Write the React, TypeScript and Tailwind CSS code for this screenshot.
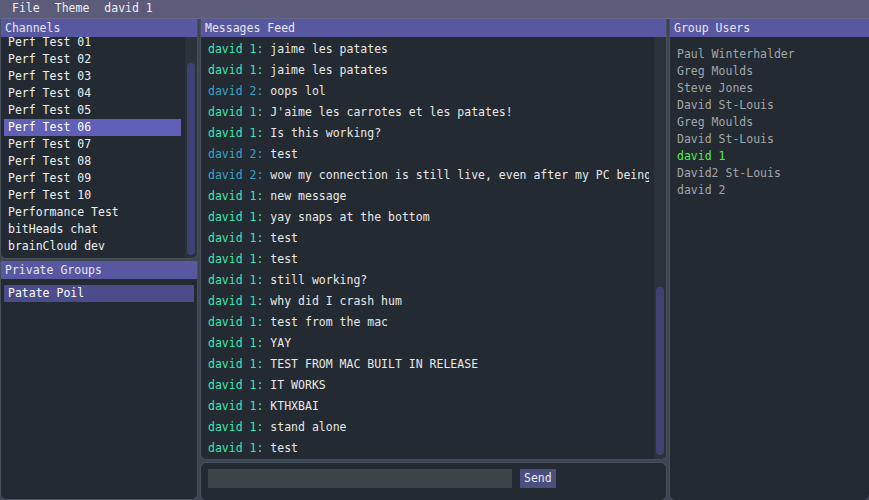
import React from "react"

const channels = [
  "Perf Test 01",
  "Perf Test 02",
  "Perf Test 03",
  "Perf Test 04",
  "Perf Test 05",
  "Perf Test 06",
  "Perf Test 07",
  "Perf Test 08",
  "Perf Test 09",
  "Perf Test 10",
  "Performance Test",
  "bitHeads chat",
  "brainCloud dev",
]

const messages: [string, string][] = [
  ["david 1", "jaime les patates"],
  ["david 1", "jaime les patates"],
  ["david 2", "oops lol"],
  ["david 1", "J'aime les carrotes et les patates!"],
  ["david 1", "Is this working?"],
  ["david 2", "test"],
  ["david 2", "wow my connection is still live, even after my PC being put to sleep"],
  ["david 1", "new message"],
  ["david 1", "yay snaps at the bottom"],
  ["david 1", "test"],
  ["david 1", "test"],
  ["david 1", "still working?"],
  ["david 1", "why did I crash hum"],
  ["david 1", "test from the mac"],
  ["david 1", "YAY"],
  ["david 1", "TEST FROM MAC BUILT IN RELEASE"],
  ["david 1", "IT WORKS"],
  ["david 1", "KTHXBAI"],
  ["david 1", "stand alone"],
  ["david 1", "test"],
]

const users = [
  "Paul Winterhalder",
  "Greg Moulds",
  "Steve Jones",
  "David St-Louis",
  "Greg Moulds",
  "David St-Louis",
  "david 1",
  "David2 St-Louis",
  "david 2",
]

function TitleBar({ title }: { title: string }) {
  return (
    <div className="h-[18px] shrink-0 bg-[#5858a0] pl-[4px] leading-[18px] text-[#e6e6f0]">{title}</div>
  )
}

export default function App() {
  return (
    <div
      className="flex h-[500px] w-[869px] flex-col overflow-hidden bg-[#3c4550] text-[11.5px] text-[#e8e8e8]"
      style={{ fontFamily: '"DejaVu Sans Mono", "Liberation Mono", monospace' }}
    >
      {/* menu bar */}
      <div className="flex h-[19px] shrink-0 items-center gap-[15px] border-b border-[#6a6a88] bg-[#5c5c7a] pl-[12px] text-[#eeeef4]">
        <span>File</span>
        <span>Theme</span>
        <span>david 1</span>
      </div>

      <div className="flex min-h-0 flex-1 gap-[2px]">
        {/* left column */}
        <div className="flex w-[198px] shrink-0 flex-col gap-[2px]">
          <div className="flex h-[240px] flex-col overflow-hidden rounded-b-[6px] border-x border-b border-[#46505a] bg-[#232a31]">
            <TitleBar title="Channels" />
            <div className="flex min-h-0 flex-1">
              <div className="min-w-0 flex-1 overflow-hidden pl-[3px]">
                <div className="-mt-[3px]">
                  {channels.map((c) => (
                    <div
                      key={c}
                      className={
                        "h-[17px] pl-[4px] leading-[17px] " +
                        (c === "Perf Test 06" ? "mr-[4px] bg-[#6060b8] text-white" : "text-[#eceff2]")
                      }
                    >
                      {c}
                    </div>
                  ))}
                </div>
              </div>
              <div className="w-[12px] shrink-0 bg-[#2a323a] px-[2px] pb-[3px] pt-[26px]">
                <div className="h-full rounded-[4px] bg-[#3e4272]" />
              </div>
            </div>
          </div>

          <div className="flex min-h-0 flex-1 flex-col overflow-hidden rounded-b-[6px] border-x border-b border-[#46505a] bg-[#232a31]">
            <TitleBar title="Private Groups" />
            <div className="px-[3px] pt-[6px]">
              <div className="h-[17px] bg-[#4a4c8c] pl-[4px] leading-[17px] text-white">Patate Poil</div>
            </div>
          </div>
        </div>

        {/* middle column */}
        <div className="flex w-[467px] shrink-0 flex-col gap-[2px]">
          <div className="flex h-[441px] flex-col overflow-hidden rounded-b-[6px] border-x border-b border-[#46505a] bg-[#232a31]">
            <TitleBar title="Messages Feed" />
            <div className="flex min-h-0 flex-1">
              <div className="min-w-0 flex-1 overflow-hidden whitespace-nowrap pl-[7px] pr-[5px] pt-[2px]">
                {messages.map(([who, text], i) => (
                  <div key={i} className="h-[21px] overflow-hidden leading-[21px]">
                    <span className={who === "david 1" ? "text-[#3ee6b4]" : "text-[#3aa4c8]"}>{who}:</span>{" "}
                    <span>{text}</span>
                  </div>
                ))}
              </div>
              <div className="w-[12px] shrink-0 bg-[#2a323a] px-[2px] pb-[4px] pt-[250px]">
                <div className="h-full rounded-[4px] bg-[#3e4272]" />
              </div>
            </div>
          </div>

          <div className="flex min-h-0 flex-1 items-start gap-[8px] rounded-[6px] border-x border-t border-[#46505a] bg-[#232a31] pl-[7px] pt-[6px]">
            <div className="h-[19px] w-[304px] bg-[#3d4448]" />
            <div className="h-[19px] bg-[#494f7e] px-[4px] leading-[19px] text-[#e8e8f0]">Send</div>
          </div>
        </div>

        {/* right column */}
        <div className="flex min-w-0 flex-1 flex-col overflow-hidden rounded-b-[6px] border-l border-[#46505a] bg-[#232a31]">
          <TitleBar title="Group Users" />
          <div className="pl-[7px] pt-[9px]">
            {users.map((u, i) => (
              <div
                key={i}
                className={"h-[17px] leading-[17px] " + (u === "david 1" ? "text-[#4cf04c]" : "text-[#a2a6aa]")}
              >
                {u}
              </div>
            ))}
          </div>
        </div>
      </div>
    </div>
  )
}
